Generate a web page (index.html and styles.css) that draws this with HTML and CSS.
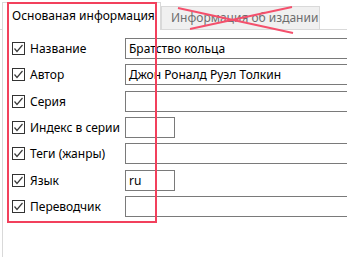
FILE: index.html
```html
<!DOCTYPE html>
<html lang="ru">
<head>
	<meta charset="UTF-8">
	<title>Свойства книги</title>
	<link rel="stylesheet" href="styles.css">
</head>
<body>
	<div class="window">
		<div class="tabbar">
			<div class="tab active">Основаная информация</div>
			<div class="tab">Информация об издании</div>
		</div>
		<div class="panel">
			<div class="fields">
				<label class="check"><span class="box"><svg width="11" height="11" viewBox="0 0 11 11"><path d="M1.5 5.5 L4 8.5 L9.5 2" fill="none" stroke="#3a3a3a" stroke-width="1.2"/></svg></span>Название</label>
				<div class="input wide">Братство кольца</div>

				<label class="check"><span class="box"><svg width="11" height="11" viewBox="0 0 11 11"><path d="M1.5 5.5 L4 8.5 L9.5 2" fill="none" stroke="#3a3a3a" stroke-width="1.2"/></svg></span>Автор</label>
				<div class="input wide">Джон Роналд Руэл Толкин</div>

				<label class="check"><span class="box"><svg width="11" height="11" viewBox="0 0 11 11"><path d="M1.5 5.5 L4 8.5 L9.5 2" fill="none" stroke="#3a3a3a" stroke-width="1.2"/></svg></span>Серия</label>
				<div class="input wide"></div>

				<label class="check"><span class="box"><svg width="11" height="11" viewBox="0 0 11 11"><path d="M1.5 5.5 L4 8.5 L9.5 2" fill="none" stroke="#3a3a3a" stroke-width="1.2"/></svg></span>Индекс в серии</label>
				<div class="input short"></div>

				<label class="check"><span class="box"><svg width="11" height="11" viewBox="0 0 11 11"><path d="M1.5 5.5 L4 8.5 L9.5 2" fill="none" stroke="#3a3a3a" stroke-width="1.2"/></svg></span>Теги (жанры)</label>
				<div class="input wide"></div>

				<label class="check"><span class="box"><svg width="11" height="11" viewBox="0 0 11 11"><path d="M1.5 5.5 L4 8.5 L9.5 2" fill="none" stroke="#3a3a3a" stroke-width="1.2"/></svg></span>Язык</label>
				<div class="input short">ru</div>

				<label class="check"><span class="box"><svg width="11" height="11" viewBox="0 0 11 11"><path d="M1.5 5.5 L4 8.5 L9.5 2" fill="none" stroke="#3a3a3a" stroke-width="1.2"/></svg></span>Переводчик</label>
				<div class="input wide"></div>
			</div>
		</div>

		<!-- пометки поверх скриншота -->
		<div class="mark-box"></div>
		<svg class="mark-cross" width="347" height="40" viewBox="0 0 347 40">
			<line x1="178" y1="8" x2="293" y2="33" stroke="#f4506c" stroke-width="2"/>
			<line x1="190" y1="29" x2="292" y2="7" stroke="#f4506c" stroke-width="2"/>
		</svg>
	</div>
</body>
</html>
```

FILE: styles.css
```css
*{
	margin: 0;
	padding: 0;
	box-sizing: border-box;
}
body{
	background: #fff;
	font: 12px "Noto Sans", "Liberation Sans", sans-serif;
	color: #000;
}
.window{
	position: relative;
	width: 347px;
	height: 257px;
	overflow: hidden;
}
.tabbar{
	display: flex;
	align-items: flex-end;
	height: 30px;
	padding-left: 2px;
	border-bottom: 1px solid #d9d9d9;
}
.tab{
	width: 159px;
	height: 23px;
	line-height: 21px;
	padding-left: 9px;
	background: #f0f0f0;
	border: 1px solid #d9d9d9;
	border-bottom: none;
	color: #6d6d6d;
	white-space: nowrap;
}
.tab.active{
	width: 159px;
	height: 28px;
	line-height: 26px;
	margin-bottom: -1px;
	background: #fff;
	color: #000;
}
.panel{
	height: 227px;
	margin-left: 2px;
	border-left: 1px solid #d9d9d9;
	padding: 8px 0 0 9px;
}
.fields{
	display: grid;
	grid-template-columns: 113px 240px;
	grid-auto-rows: 21px;
	row-gap: 5.33px;
}
.check{
	display: flex;
	align-items: center;
	gap: 5px;
	white-space: nowrap;
}
.box{
	display: flex;
	align-items: center;
	justify-content: center;
	width: 13px;
	height: 13px;
	border: 1px solid #333;
	background: #fff;
}
.input{
	height: 21px;
	border: 1px solid #7a7a7a;
	padding-left: 3px;
	line-height: 19px;
	white-space: nowrap;
}
.input.short{
	width: 50px;
}
.mark-box{
	position: absolute;
	left: 7px;
	top: 2px;
	width: 150px;
	height: 221px;
	border: 2px solid #f2405c;
}
.mark-cross{
	position: absolute;
	left: 0;
	top: 0;
}
```
